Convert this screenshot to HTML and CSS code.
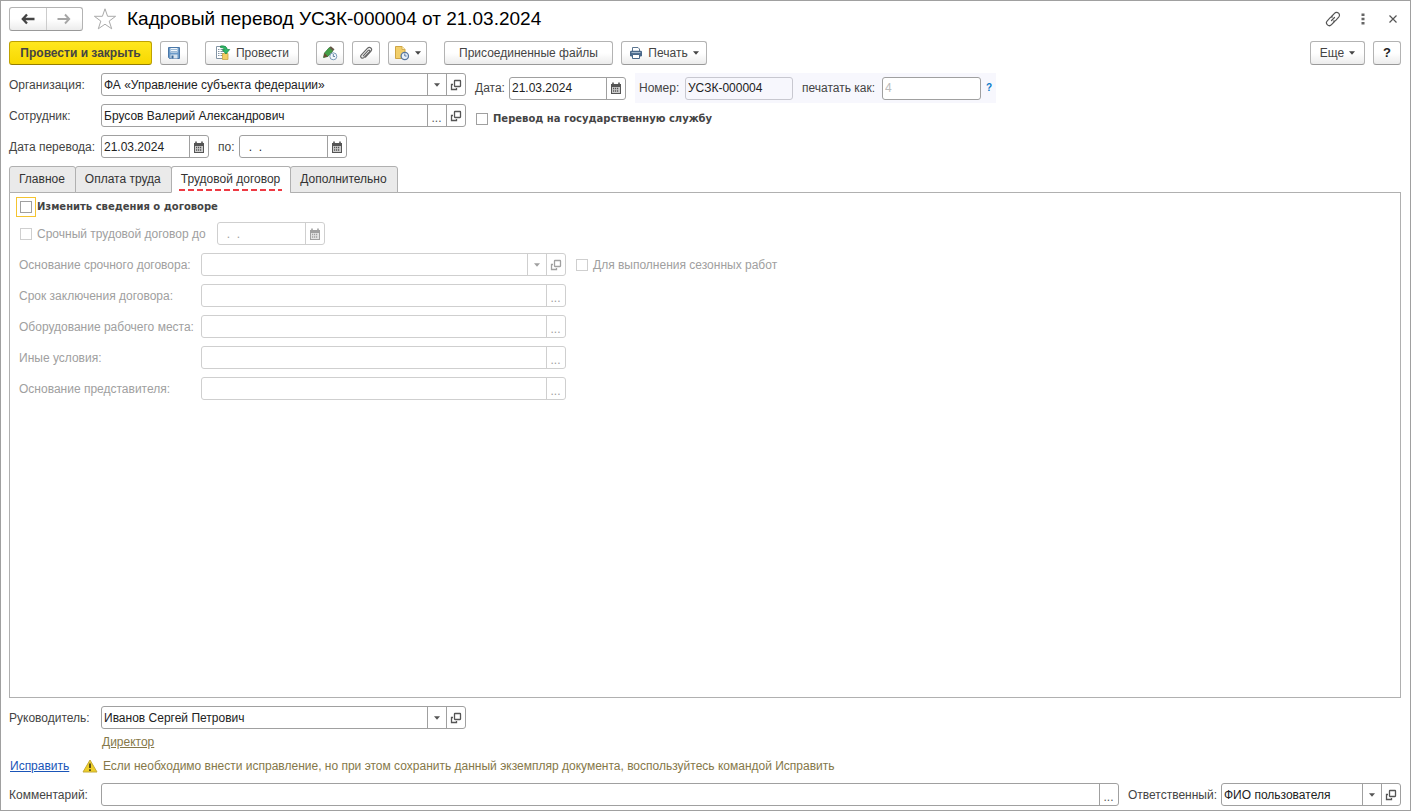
FILE: index.html
```html
<!DOCTYPE html>
<html lang="ru">
<head>
<meta charset="utf-8">
<title>Кадровый перевод УСЗК-000004 от 21.03.2024</title>
<link rel="stylesheet" href="styles.css">
</head>
<body spellcheck="false">
<svg class="defs" aria-hidden="true">
  <symbol id="open" viewBox="0 0 12 12"><rect x="4.500" y="1.500" width="6" height="6" rx=".5" fill="none" stroke="currentColor" stroke-width="1.300"/><path d="M3 5.500H1.500v5h5V9" fill="none" stroke="currentColor" stroke-width="1.300"/></symbol>
  <symbol id="cal" viewBox="0 0 12 12"><path d="M1 2h10v10H1z" fill="currentColor"/><path d="M3 .5v2M9 .5v2" stroke="currentColor" stroke-width="1.600"/><path d="M2 5h8v6H2z" fill="#fff" opacity=".7"/><path d="M3 6.500h6M3 9h6" stroke="currentColor" stroke-width="1.300" stroke-dasharray="1.200 .8"/></symbol>
  <symbol id="down" viewBox="0 0 6 4"><path d="M0 .3h6L3 3.800z" fill="currentColor"/></symbol>
</svg>
<main class="window">
  <header class="title-bar">
    <div class="nav">
      <button type="button" aria-label="Назад"><svg width="14" height="12" viewBox="0 0 14 12"><path d="M6 1.500 1.800 6 6 10.500M2 6h11.500" fill="none" stroke="#444" stroke-width="2.300"/></svg></button>
      <button type="button" aria-label="Вперед"><svg width="14" height="12" viewBox="0 0 14 12"><path d="M8 1.500 12.200 6 8 10.500M12 6H.5" fill="none" stroke="#a6a6a6" stroke-width="1.900"/></svg></button>
    </div>
    <button type="button" class="bare" aria-label="Избранное"><svg width="24" height="24" viewBox="0 0 24 24"><path d="M12 1.800 14.600 9.300h8l-6.400 4.800 2.500 7.700L12 17.200l-6.700 4.600 2.500-7.700L1.400 9.300h8z" fill="#fff" stroke="#aaa" stroke-width="1"/></svg></button>
    <h1>Кадровый перевод УСЗК-000004 от 21.03.2024</h1>
    <div class="window-tools">
      <button type="button" class="bare" aria-label="Ссылка"><svg width="16" height="16" viewBox="0 0 16 16"><g fill="none" stroke="#555" stroke-width="1.200" stroke-linecap="round"><path d="M6.500 5.500 9.500 2.300a2.700 2.700 0 0 1 4.200 3.900L10.800 9.300a2.500 2.500 0 0 1-2.300.7"/><path d="M9.500 10.500 6.500 13.700a2.700 2.700 0 0 1-4.200-3.900L5.200 6.700A2.500 2.500 0 0 1 7.500 6M6.500 9.500l3-3"/></g></svg></button>
      <button type="button" class="bare" aria-label="Меню"><svg width="4" height="12" viewBox="0 0 4 12"><path d="M.5.500h3v2.500h-3zM.5 4.800h3v2.500h-3zM.5 9h3v2.500h-3z" fill="#666"/></svg></button>
      <button type="button" class="bare" aria-label="Закрыть"><svg width="8" height="8" viewBox="0 0 8 8"><path d="m.5.500 7 7m0-7-7 7" stroke="#555" stroke-width="1.200"/></svg></button>
    </div>
  </header>

  <div class="toolbar">
    <div class="group">
      <button type="button" class="btn primary">Провести и закрыть</button>
      <button type="button" class="btn icon" aria-label="Записать"><svg width="14" height="14" viewBox="0 0 14 14"><path d="M1.500 1.500h11v11h-10l-1-1z" fill="#6b9ac8" stroke="#4a77a8"/><path d="M3.500 2h7v4.500h-7z" fill="#f2f7fb"/><path d="M4 3.500h6M4 5.500h6" stroke="#9dbad6"/><path d="M3.500 8.500h7v4h-7z" fill="#d6e3ef"/><path d="M4.500 9.500h2v3h-2z" fill="#3b6898"/></svg></button>
    </div>
    <div class="group">
      <button type="button" class="btn post-doc"><svg width="16" height="16" viewBox="0 0 16 16"><path d="M1.500 1.500h9v12h-9z" fill="#fff" stroke="#8294a4"/><path d="M3 4.500h1.500m1 0H9M3 6.500h1.500m1 0H9M3 8.500h1.500m1 0H9M3 10.500h1.500m1 0H9" stroke="#8294a4"/><path d="M7.500 8.500h5.500v6H7.500z" fill="#f2ce62" stroke="#c9a445" stroke-width=".8"/><path d="M5.500 1c4-.6 6.500.8 6.800 3.500h2.400L11 9 7.300 4.800h2C9 3.300 8 2.600 5.500 2.500z" fill="#2fb866" stroke="#178544" stroke-width=".7"/></svg>Провести</button>
    </div>
    <div class="group">
      <button type="button" class="btn icon" aria-label="Отложенное проведение"><svg width="16" height="16" viewBox="0 0 16 16"><path d="m1.500 12.500 1-4.500 4.800-5.500 3.700 3.300-5 5.600z" fill="#43a047" stroke="#27702b" stroke-width=".7"/><path d="m7.300 2.500 1.500-1.300 3.700 3-1.500 1.700z" fill="#655946"/><path d="m1.500 12.500 1-4.500 3.500 3.400z" fill="#6a4d35"/><circle cx="11.300" cy="11.300" r="3.500" fill="#f3f8fc" stroke="#7a9bb9"/><path d="M11.300 9v2.500H13" fill="none" stroke="#527799" stroke-width=".9"/></svg></button>
      <button type="button" class="btn icon" aria-label="Файлы"><svg width="14" height="14" viewBox="0 0 14 14"><path d="M4.200 9.800 9 4.600c1.100-1.200 2.400 0 1.400 1.200l-5.300 5.600c-2 2-4.600-.4-2.700-2.500l6-6.500c2.400-2.500 5.600.4 3.400 3l-5.300 5.700" fill="none" stroke="#666" stroke-width="1.200" stroke-linecap="round"/></svg></button>
      <button type="button" class="btn split" aria-label="Напоминание"><svg width="16" height="16" viewBox="0 0 16 16"><path d="M1.500 1.500H8L11 4.500v9H1.500z" fill="#f2cf6a" stroke="#cfa544"/><path d="M8 1.500v3h3" fill="#fff1b9" stroke="#cfa544" stroke-width=".8"/><circle cx="10.800" cy="11" r="3.700" fill="#e9f1fa" stroke="#5878a0" stroke-width="1.300"/><path d="M10.800 8.500V11h1.800" fill="none" stroke="#5878a0"/></svg><svg class="caret"><use href="#down"/></svg></button>
    </div>
    <div class="group">
      <button type="button" class="btn files">Присоединенные файлы</button>
      <button type="button" class="btn print"><svg width="14" height="14" viewBox="0 0 14 14"><path d="M3.500 5V1.500h5.500l1.500 1.500v2" fill="#fff" stroke="#5b7590"/><rect x="1" y="4.800" width="12" height="5.700" rx="1.200" fill="#49688a"/><path d="M2.500 6.600h9" stroke="#aec2d6"/><path d="M3.500 8.500h7v4h-7z" fill="#fff" stroke="#49688a"/></svg>Печать<svg class="caret"><use href="#down"/></svg></button>
    </div>
    <div class="group end">
      <button type="button" class="btn more">Еще<svg class="caret"><use href="#down"/></svg></button>
      <button type="button" class="btn icon help">?</button>
    </div>
  </div>

  <section class="head-form">
    <div class="rows">
      <div class="row"><label class="name" for="org">Организация:</label><div class="field long"><input id="org" value="ФА «Управление субъекта федерации»"><button type="button" aria-label="Выбрать"><svg class="caret"><use href="#down"/></svg></button><button type="button" aria-label="Открыть"><svg class="glyph"><use href="#open"/></svg></button></div></div>
      <div class="row"><label class="name" for="emp">Сотрудник:</label><div class="field long"><input id="emp" value="Брусов Валерий Александрович"><button type="button" class="dots">...</button><button type="button" aria-label="Открыть"><svg class="glyph"><use href="#open"/></svg></button></div></div>
      <div class="row"><label class="name" for="from">Дата перевода:</label><div class="field date"><input id="from" value="21.03.2024"><button type="button" aria-label="Календарь"><svg class="glyph"><use href="#cal"/></svg></button></div><label class="to" for="till">по:</label><div class="field date"><input id="till" value="&nbsp; .&nbsp; ."><button type="button" aria-label="Календарь"><svg class="glyph"><use href="#cal"/></svg></button></div></div>
    </div>
    <div class="side">
      <div class="doc-row">
        <label class="date-name" for="date">Дата:</label><div class="field doc-date"><input id="date" value="21.03.2024"><button type="button" aria-label="Календарь"><svg class="glyph"><use href="#cal"/></svg></button></div>
        <div class="number">
          <label class="num-name" for="num">Номер:</label><div class="field date readonly"><input id="num" value="УСЗК-000004" readonly></div>
          <label class="print-name" for="pr">печатать как:</label><div class="field print-as"><input id="pr" placeholder="4"></div>
          <button type="button" class="bare hint">?</button>
        </div>
      </div>
      <label class="check strong"><input type="checkbox">Перевод на государственную службу</label>
    </div>
  </section>

  <div class="tabs" role="tablist">
    <button type="button" role="tab">Главное</button><button type="button" role="tab">Оплата труда</button><button type="button" role="tab" aria-selected="true"><span>Трудовой договор</span></button><button type="button" role="tab">Дополнительно</button>
  </div>
  <section class="panel" role="tabpanel">
    <label class="check strong focus"><input type="checkbox">Изменить сведения о договоре</label>
    <div class="rows off">
      <div class="row"><label class="check term"><input type="checkbox" disabled>Срочный трудовой договор до</label><div class="field date"><input aria-label="Срок до" value="&nbsp; .&nbsp; ." disabled><button type="button" aria-label="Календарь" disabled><svg class="glyph"><use href="#cal"/></svg></button></div></div>
      <div class="row"><label class="name" for="f1">Основание срочного договора:</label><div class="field long"><input id="f1" disabled><button type="button" aria-label="Выбрать" disabled><svg class="caret"><use href="#down"/></svg></button><button type="button" aria-label="Открыть" disabled><svg class="glyph"><use href="#open"/></svg></button></div><label class="check season"><input type="checkbox" disabled>Для выполнения сезонных работ</label></div>
      <div class="row"><label class="name" for="f2">Срок заключения договора:</label><div class="field long"><input id="f2" disabled><button type="button" class="dots" disabled>...</button></div></div>
      <div class="row"><label class="name" for="f3">Оборудование рабочего места:</label><div class="field long"><input id="f3" disabled><button type="button" class="dots" disabled>...</button></div></div>
      <div class="row"><label class="name" for="f4">Иные условия:</label><div class="field long"><input id="f4" disabled><button type="button" class="dots" disabled>...</button></div></div>
      <div class="row"><label class="name" for="f5">Основание представителя:</label><div class="field long"><input id="f5" disabled><button type="button" class="dots" disabled>...</button></div></div>
    </div>
  </section>

  <footer class="foot">
    <div class="row"><label class="name" for="boss">Руководитель:</label><div class="field long"><input id="boss" value="Иванов Сергей Петрович"><button type="button" aria-label="Выбрать"><svg class="caret"><use href="#down"/></svg></button><button type="button" aria-label="Открыть"><svg class="glyph"><use href="#open"/></svg></button></div></div>
    <a class="post" href="#">Директор</a>
    <div class="fix"><a href="#">Исправить</a><svg width="16" height="14" viewBox="0 0 16 14"><path d="M8 1 15 13H1z" fill="#efcf27" stroke="#c3aa3b" stroke-linejoin="round"/><path d="M8 4.500v4.500M8 10.300v1.700" stroke="#4c431a" stroke-width="1.800"/></svg><span>Если необходимо внести исправление, но при этом сохранить данный экземпляр документа, воспользуйтесь командой Исправить</span></div>
    <div class="row"><label class="name" for="com">Комментарий:</label><div class="field grow"><input id="com"><button type="button" class="dots">...</button></div><label class="resp" for="resp">Ответственный:</label><div class="field user"><input id="resp" value="ФИО пользователя"><button type="button" aria-label="Выбрать"><svg class="caret"><use href="#down"/></svg></button><button type="button" aria-label="Открыть"><svg class="glyph"><use href="#open"/></svg></button></div></div>
  </footer>
</main>
</body>
</html>
```
FILE: styles.css
```css
* { box-sizing: border-box; }
body { margin: 0; background: #fff; color: #444; font: 12px/16px "Liberation Sans", Arial, sans-serif; }
button, input { font: inherit; color: inherit; margin: 0; padding: 0; }
button { border: 0; background: none; }
svg { flex: none; display: block; }
.defs { position: absolute; width: 0; height: 0; }
.window { display: flex; flex-direction: column; min-height: 100vh; padding: 6px 9px 4px 8px; border: 1px solid #a0a0a0; }

.title-bar { display: flex; align-items: center; height: 24px; }
.nav { display: flex; width: 74px; height: 24px; border: 1px solid #b3b3b3; border-bottom-color: #999; border-radius: 3px; background: linear-gradient(#fff 50%, #ececec); }
.nav button { flex: 1; display: flex; align-items: center; justify-content: center; }
.nav button + button { border-left: 1px solid #ccc; }
.bare { display: flex; align-items: center; justify-content: center; }
.title-bar > .bare { margin: 0 10px; }
h1 { margin: 0; font-size: 19px; font-weight: 400; line-height: 24px; color: #000; }
.window-tools { display: flex; align-items: center; gap: 14px; margin-left: auto; }
.window-tools .bare { width: 16px; height: 16px; }

.toolbar { display: flex; gap: 17px; margin-top: 10px; }
.group { display: flex; gap: 8px; }
.end { margin-left: auto; }
.btn { display: flex; align-items: center; justify-content: center; gap: 5px; height: 24px; padding: 0 5px; border: 1px solid #b3b3b3; border-bottom-color: #999; border-radius: 3px; background: linear-gradient(#fff 50%, #ececec); white-space: nowrap; }
.icon { width: 28px; }
.split { width: 39px; }
.post-doc { min-width: 94px; }
.print { min-width: 86px; }
.files { min-width: 169px; }
.more { min-width: 55px; }
.help { color: #222; font-size: 13px; font-weight: 700; }
.primary { min-width: 143px; background: linear-gradient(#ffe71e, #f7d800); border-color: #bfa200; border-bottom-color: #957e00; font-weight: 700; }
.caret { width: 6px; height: 4px; }
.glyph { width: 12px; height: 12px; }

.row { display: flex; align-items: center; height: 23px; }
.rows { display: flex; flex-direction: column; gap: 8px; }
.name { flex: none; width: 92px; white-space: nowrap; }
.field { flex: none; display: flex; height: 23px; border: 1px solid #a0a0a0; border-radius: 3px; background: #fff; color: #222; }
.field input { flex: 1; min-width: 0; padding: 0 2px; border: 0; outline: 0; background: none; }
.field button { display: flex; align-items: center; justify-content: center; width: 19px; padding-right: 1px; border-left: 1px solid #a0a0a0; color: #555; }
.field .dots { align-items: flex-end; }
.long { width: 365px; }
.date { width: 108px; }
.to { width: 30px; padding-left: 9px; }

.head-form { display: flex; gap: 9px; margin-top: 8px; }
.side { flex: 1; }
.doc-row { display: flex; align-items: center; height: 30px; }
.date-name { width: 34px; }
.doc-date { width: 117px; }
.number { display: flex; align-items: center; height: 30px; margin-left: 9px; padding: 0 1px 0 4px; background: #f7f7fd; }
.num-name { width: 46px; }
.print-name { width: 89px; padding-left: 9px; white-space: nowrap; }
.print-as { width: 99px; }
.print-as input::placeholder { color: #bbb; opacity: 1; }
.readonly { background: none; border-color: #c8c8d0; }
.hint { width: 14px; height: 16px; padding-left: 2px; color: #0a7ac8; font-size: 10px; font-weight: 700; }
.check { display: flex; align-items: center; gap: 5px; white-space: nowrap; }
.check input { appearance: none; width: 12px; height: 12px; border: 1px solid #a0a0a0; background: #fff; }
.strong { font: 700 10px/16px "DejaVu Sans", Verdana, sans-serif; }
.side .check { margin: 8px 0 0 1px; }

.tabs { display: flex; margin-top: 8px; height: 27px; margin-bottom: -1px; z-index: 1; }
.tabs button { padding: 0 10px 2px 9px; border: 1px solid #b0b0b0; border-radius: 3px 3px 0 0; background: #eaeaea; color: #333; }
.tabs button + button { margin-left: -1px; }
.tabs button[aria-selected] { background: #fff; border-bottom-color: #fff; }
.tabs span { display: block; height: 20px; margin: 4px -2px 0; padding: 0 2px; background: repeating-linear-gradient(90deg, #ee3a43 0 6px, transparent 6px 9px) bottom / 100% 2px no-repeat; }
.panel { flex: 1; padding: 6px 9px 9px; border: 1px solid #b0b0b0; }
.panel .check { padding-left: 1px; }
.focus input { outline: 1px solid #f4c430; outline-offset: 3px; }
.off { margin-top: 7px; color: #a0a0a0; }
.off .field, .off .field button, .off .check input { border-color: #cfcfcf; color: #a0a0a0; }
.off .name { width: 182px; }
.off .term { width: 198px; }
.off .season { margin-left: 9px; }

.foot { margin-top: 8px; }
.foot a { color: #1a55b8; }
.foot .post { display: block; margin: 5px 0 0 93px; color: #857849; }
.fix { display: flex; align-items: center; height: 16px; margin: 8px 0 9px; color: #857849; }
.fix a { width: 73px; padding-left: 1px; }
.fix span { margin-left: 5px; }
.grow { flex: 1; }
.resp { width: 102px; padding-left: 9px; }
.user { width: 180px; }
```
